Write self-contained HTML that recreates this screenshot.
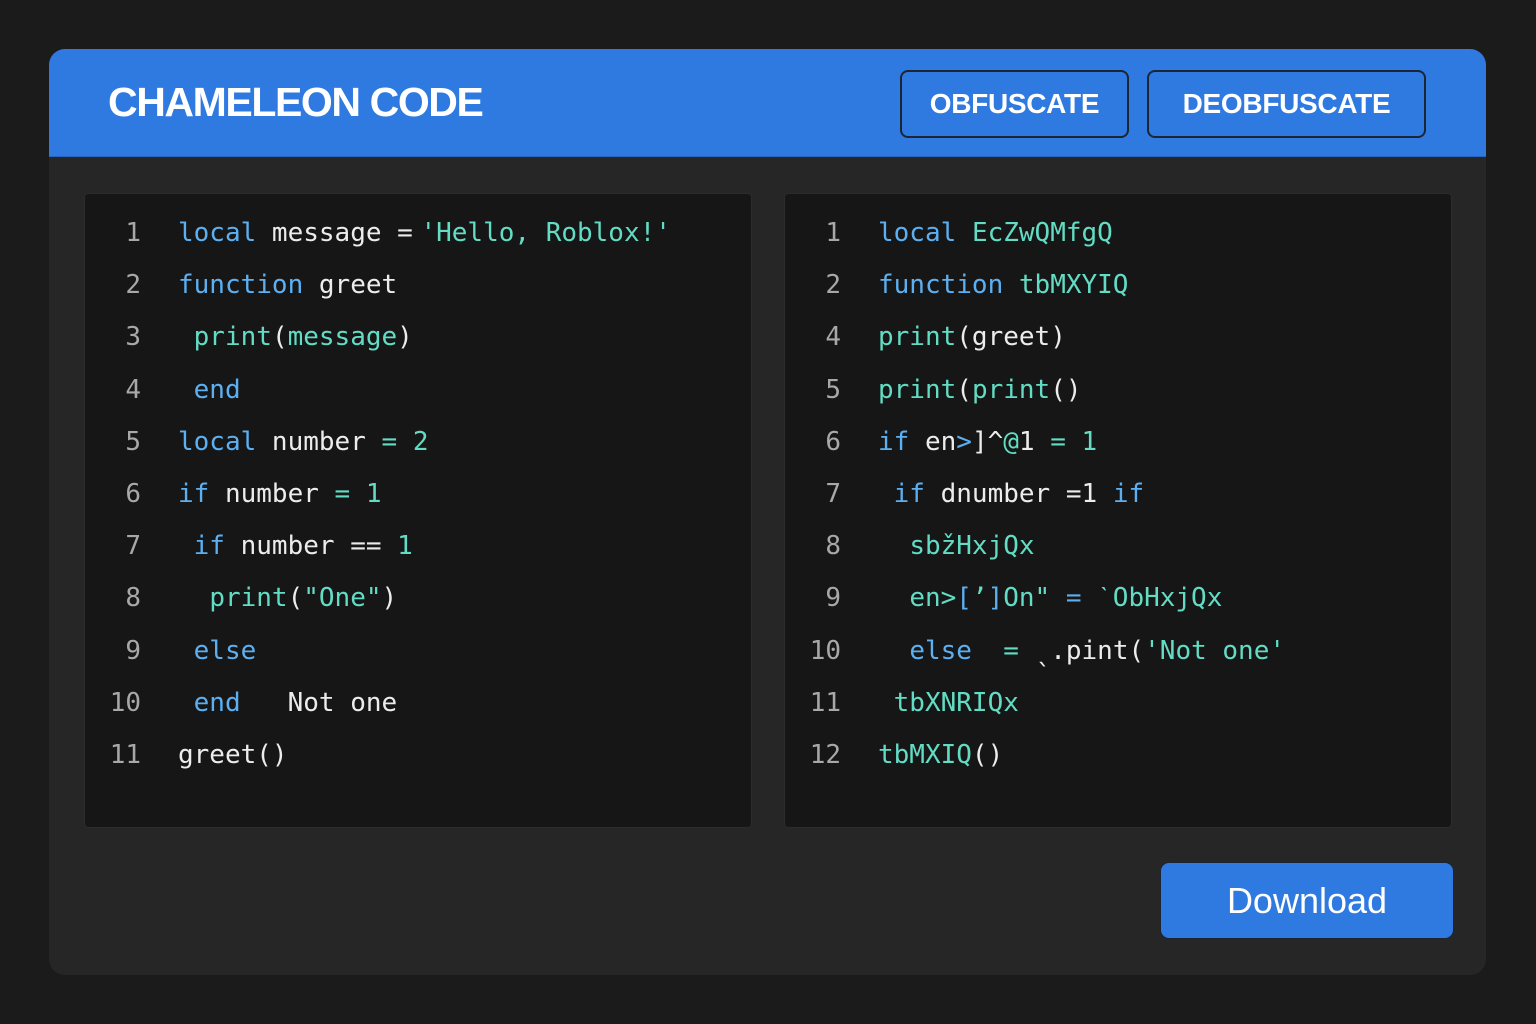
<!DOCTYPE html>
<html><head><meta charset="utf-8"><style>
*{margin:0;padding:0;box-sizing:border-box}
body{width:1536px;height:1024px;background:#1b1b1b;position:relative;overflow:hidden;font-family:"Liberation Sans",sans-serif}
.card{position:absolute;left:49px;top:49px;width:1437px;height:926px;background:#262626;border-radius:16px;overflow:hidden}
.hdr{position:absolute;left:0;top:0;width:100%;height:108px;background:#2f7ae0;border-bottom:1px solid #2466c0}
.title{position:absolute;left:59px;top:28px;color:#fff;font-weight:bold;font-size:41px;letter-spacing:-1.4px;line-height:50px}
.btn{position:absolute;top:21px;height:68px;border:2px solid #1c2533;border-radius:8px;color:#fff;font-weight:bold;font-size:28px;display:flex;align-items:center;justify-content:center;letter-spacing:-0.3px}
.panel{position:absolute;top:144px;width:668px;height:635px;background:#161616;border:1px solid #2c2c2c;border-radius:4px;padding-top:13px}
.ln{height:52.2px;line-height:52px;font-family:"DejaVu Sans Mono","Liberation Mono",monospace;font-size:26px;white-space:pre;color:#ececec;position:relative}
.n{position:absolute;right:610px;color:#a8a8a8;text-align:right}
.c{position:absolute;left:93px}
.k{color:#5cb0f2}.t{color:#62dcc4}.w{color:#ececec}
.dl{position:absolute;left:1111px;top:813px;width:294px;height:77px;background:#2f7ae0;border:1px solid #1c2533;border-radius:9px;color:#fff;font-size:36px;display:flex;align-items:center;justify-content:center}
</style></head><body>
<div class="card">
<div class="hdr">
<div class="title">CHAMELEON CODE</div>
<div class="btn" style="left:851px;width:229px">OBFUSCATE</div>
<div class="btn" style="left:1098px;width:279px">DEOBFUSCATE</div>
</div>
<div class="panel" style="left:35px">
<div class="ln"><span class="n">1</span><span class="c"><span class="k">local</span> message = <span class="t" style="margin-left:-8px">'Hello, Roblox!'</span></span></div>
<div class="ln"><span class="n">2</span><span class="c"><span class="k">function</span> greet</span></div>
<div class="ln"><span class="n">3</span><span class="c"> <span class="t">print</span>(<span class="t">message</span>)</span></div>
<div class="ln"><span class="n">4</span><span class="c"> <span class="k">end</span></span></div>
<div class="ln"><span class="n">5</span><span class="c"><span class="k">local</span> number <span class="t">= 2</span></span></div>
<div class="ln"><span class="n">6</span><span class="c"><span class="k">if</span> number <span class="t">= 1</span></span></div>
<div class="ln"><span class="n">7</span><span class="c"> <span class="k">if</span> number == <span class="t">1</span></span></div>
<div class="ln"><span class="n">8</span><span class="c">  <span class="t">print</span>(<span class="t">"One"</span>)</span></div>
<div class="ln"><span class="n">9</span><span class="c"> <span class="k">else</span></span></div>
<div class="ln"><span class="n">10</span><span class="c"> <span class="k">end</span>   Not one</span></div>
<div class="ln"><span class="n">11</span><span class="c">greet()</span></div>
</div>
<div class="panel" style="left:735px">
<div class="ln"><span class="n">1</span><span class="c"><span class="k">local</span> <span class="t">EcZwQMfgQ</span></span></div>
<div class="ln"><span class="n">2</span><span class="c"><span class="k">function</span> <span class="t">tbMXYIQ</span></span></div>
<div class="ln"><span class="n">4</span><span class="c"><span class="t">print</span>(greet)</span></div>
<div class="ln"><span class="n">5</span><span class="c"><span class="t">print</span>(<span class="t">print</span>()</span></div>
<div class="ln"><span class="n">6</span><span class="c"><span class="k">if</span> en<span class="k">&gt;</span>]^<span class="t">@</span>1 <span class="t">= 1</span></span></div>
<div class="ln"><span class="n">7</span><span class="c"> <span class="k">if</span> dnumber =1 <span class="k">if</span></span></div>
<div class="ln"><span class="n">8</span><span class="c">  <span class="t">sbžHxjQx</span></span></div>
<div class="ln"><span class="n">9</span><span class="c">  <span class="t">en&gt;</span><span class="k">[</span><span class="t">’</span><span class="k">]</span><span class="t">On"</span> <span class="k">=</span> <span class="t">ˋObHxjQx</span></span></div>
<div class="ln"><span class="n">10</span><span class="c">  <span class="k">else</span>  <span class="t">=</span> ˎ.pint(<span class="t">'Not one'</span></span></div>
<div class="ln"><span class="n">11</span><span class="c"> <span class="t">tbXNRIQx</span></span></div>
<div class="ln"><span class="n">12</span><span class="c"><span class="t">tbMXIQ</span>()</span></div>
</div>
<div class="dl">Download</div>
</div>
</body></html>
